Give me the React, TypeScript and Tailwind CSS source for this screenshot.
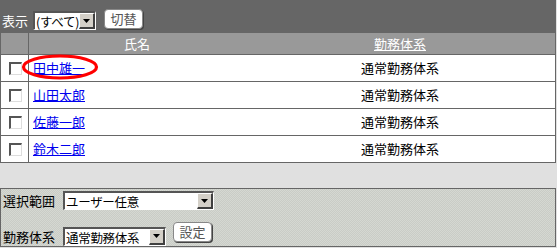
import React from 'react';

const font = '[font-family:"Noto_Sans_CJK_JP",sans-serif]';

// Old-style select box with a 3D border and arrow button
function FakeSelect({ label, width }: { label: string; width: string }) {
  return (
    <div
      className={`flex h-[19px] ${width} border-t-2 border-l-2 border-t-[#555] border-l-[#555] border-b border-r border-b-white border-r-white bg-white`}
    >
      <span className="flex-1 whitespace-nowrap pl-[1px] text-[12.5px] leading-[17px] tracking-[-0.3px] text-black">
        {label}
      </span>
      <span className="flex h-[16px] w-[16px] shrink-0 items-center justify-center border-t border-l border-t-white border-l-white border-b-2 border-r-2 border-b-[#404040] border-r-[#404040] bg-[#d4d0c8]">
        <svg width="7" height="4" viewBox="0 0 7 4">
          <path d="M0 0h7L3.5 4z" fill="#000" />
        </svg>
      </span>
    </div>
  );
}

function OldButton({ label }: { label: string }) {
  return (
    <button
      type="button"
      className="h-[20px] w-[39px] rounded-[4px] border border-[#888] bg-white text-[13px] leading-[16px] text-[#555] shadow-[1px_1px_0_#444]"
    >
      {label}
    </button>
  );
}

function Checkbox() {
  return (
    <span className="block h-[13px] w-[13px] border-t-2 border-l-2 border-t-[#555] border-l-[#555] border-b border-r border-b-[#ddd] border-r-[#ddd] bg-white" />
  );
}

const people = ['田中雄一', '山田太郎', '佐藤一郎', '鈴木二郎'];

export default function App() {
  return (
    <div className={`h-[248px] w-[557px] bg-[#e0e0e0] ${font}`}>
      {/* filter bar */}
      <div className="flex h-[33px] w-[556px] items-start bg-[#666]">
        <span className="mt-[11px] pl-[2px] pr-[5px] text-[13px] leading-[19px] text-white">表示</span>
        <div className="mt-[11px]">
          <FakeSelect label="(すべて)" width="w-[63px]" />
        </div>
        <div className="ml-[8px] mt-[5px]">
          <OldButton label="切替" />
        </div>
      </div>

      {/* list */}
      <div className="w-[556px] border-x border-[#666]">
        <div className="grid h-[22px] grid-cols-[28px_216px_1fr] border-b border-[#666] bg-[#999] text-[13px] leading-[21px] text-white">
          <div className="border-r border-[#666]" />
          <div className="text-center">氏名</div>
          <div className="text-center underline">勤務体系</div>
        </div>
        {people.map((name, i) => (
          <div
            key={name}
            className="grid h-[27px] grid-cols-[28px_216px_1fr] border-b border-[#666] bg-white text-[13px]"
          >
            <div className="flex items-center justify-center border-r border-[#666] pl-[2px]">
              <Checkbox />
            </div>
            <div className="relative flex items-center pl-[4px]">
              <a href="#" className="text-[#0000ee] underline">
                {name}
              </a>
              {i === 0 && (
                <svg
                  className="absolute left-[-8px] top-[-1px]"
                  width="78"
                  height="27"
                  viewBox="0 0 78 27"
                >
                  <ellipse cx="39" cy="13" rx="36.5" ry="11" fill="none" stroke="#ff0000" strokeWidth="3.2" />
                </svg>
              )}
            </div>
            <div className="flex items-center justify-center text-black">通常勤務体系</div>
          </div>
        ))}
      </div>

      {/* settings panel */}
      <div className="mt-[25px] h-[59px] w-[556px] border border-[#666] bg-[#cfd2cc] bg-[repeating-conic-gradient(#c9ccc6_0_25%,#d5d8d2_0_50%)] bg-[length:2px_2px]">
        <div className="flex items-center pt-[2px]">
          <span className="w-[62px] pl-[2px] text-[13px] text-black">選択範囲</span>
          <FakeSelect label="ユーザー任意" width="w-[151px]" />
        </div>
        <div className="mt-[7px] flex items-end">
          <span className="w-[62px] pl-[2px] text-[13px] leading-[19px] text-black">勤務体系</span>
          <FakeSelect label="通常勤務体系" width="w-[103px]" />
          <div className="mb-[4px] ml-[7px]">
            <OldButton label="設定" />
          </div>
        </div>
      </div>
    </div>
  );
}
